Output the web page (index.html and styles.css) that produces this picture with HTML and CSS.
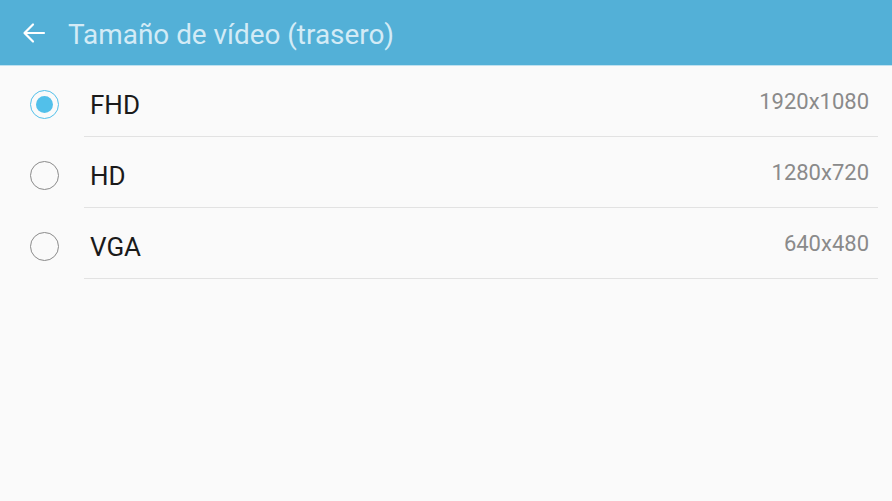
FILE: index.html
```html
<!DOCTYPE html>
<html lang="es">
<head>
  <meta charset="UTF-8">
  <meta name="viewport" content="width=device-width, initial-scale=1.0">
  <title>Tamaño de vídeo (trasero)</title>
  <link rel="stylesheet" href="styles.css">
</head>
<body>
  <header class="topbar">
    <span class="back">
      <svg width="24" height="24" viewBox="0 0 24 24">
        <path d="M22 12H3M11 3.5L2.5 12L11 20.5" fill="none" stroke="#ffffff" stroke-width="2.2" stroke-linecap="round" stroke-linejoin="round"/>
      </svg>
    </span>
    <h1 class="title">Tamaño de vídeo (trasero)</h1>
  </header>

  <ul class="options">
    <li class="option">
      <span class="radio-col"><span class="radio checked"></span></span>
      <div class="option-body">
        <span class="label">FHD</span>
        <span class="value">1920x1080</span>
      </div>
    </li>
    <li class="option">
      <span class="radio-col"><span class="radio"></span></span>
      <div class="option-body">
        <span class="label">HD</span>
        <span class="value">1280x720</span>
      </div>
    </li>
    <li class="option">
      <span class="radio-col"><span class="radio"></span></span>
      <div class="option-body">
        <span class="label">VGA</span>
        <span class="value">640x480</span>
      </div>
    </li>
  </ul>
</body>
</html>
```

FILE: styles.css
```css
/* Reset */
* {
    margin: 0;
    padding: 0;
    box-sizing: border-box;
}

body {
    font-family: Roboto, "Noto Sans", sans-serif;
    background: #fafafa;
    width: 892px;
    height: 501px;
    overflow: hidden;
}

/* Top bar */
.topbar {
    height: 66px;
    background: #53b0d7;
    border-bottom: 1px solid #bfe1f0;
    display: flex;
    align-items: center;
    padding-left: 22px;
    padding-top: 3px;
}

.back {
    display: flex;
    width: 24px;
    height: 24px;
    margin-right: 22px;
    margin-top: -2px;
}

.title {
    font-size: 27.9px;
    font-weight: 400;
    color: #d3ebf6;
}

/* Option list */
.options {
    list-style: none;
}

.option {
    display: flex;
    height: 71px;
}

.radio-col {
    width: 84px;
    display: flex;
    align-items: center;
    padding-left: 30px;
    padding-top: 6px;
}

.radio {
    width: 29px;
    height: 29px;
    border-radius: 50%;
    border: 1.7px solid #8a8a8a;
    display: flex;
    align-items: center;
    justify-content: center;
}

.radio.checked {
    border-color: #52c0ea;
}

.radio.checked::after {
    content: "";
    width: 17px;
    height: 17px;
    border-radius: 50%;
    background: #52c0ea;
}

.option-body {
    flex: 1;
    display: flex;
    align-items: center;
    justify-content: space-between;
    margin-right: 14px;
    padding: 8px 9px 0 6px;
    border-bottom: 1px solid #e2e2e2;
}

.label {
    font-size: 26px;
    color: #1a1a1a;
}

.value {
    font-size: 22px;
    color: #8a8a8a;
    margin-bottom: 7px;
}
```
